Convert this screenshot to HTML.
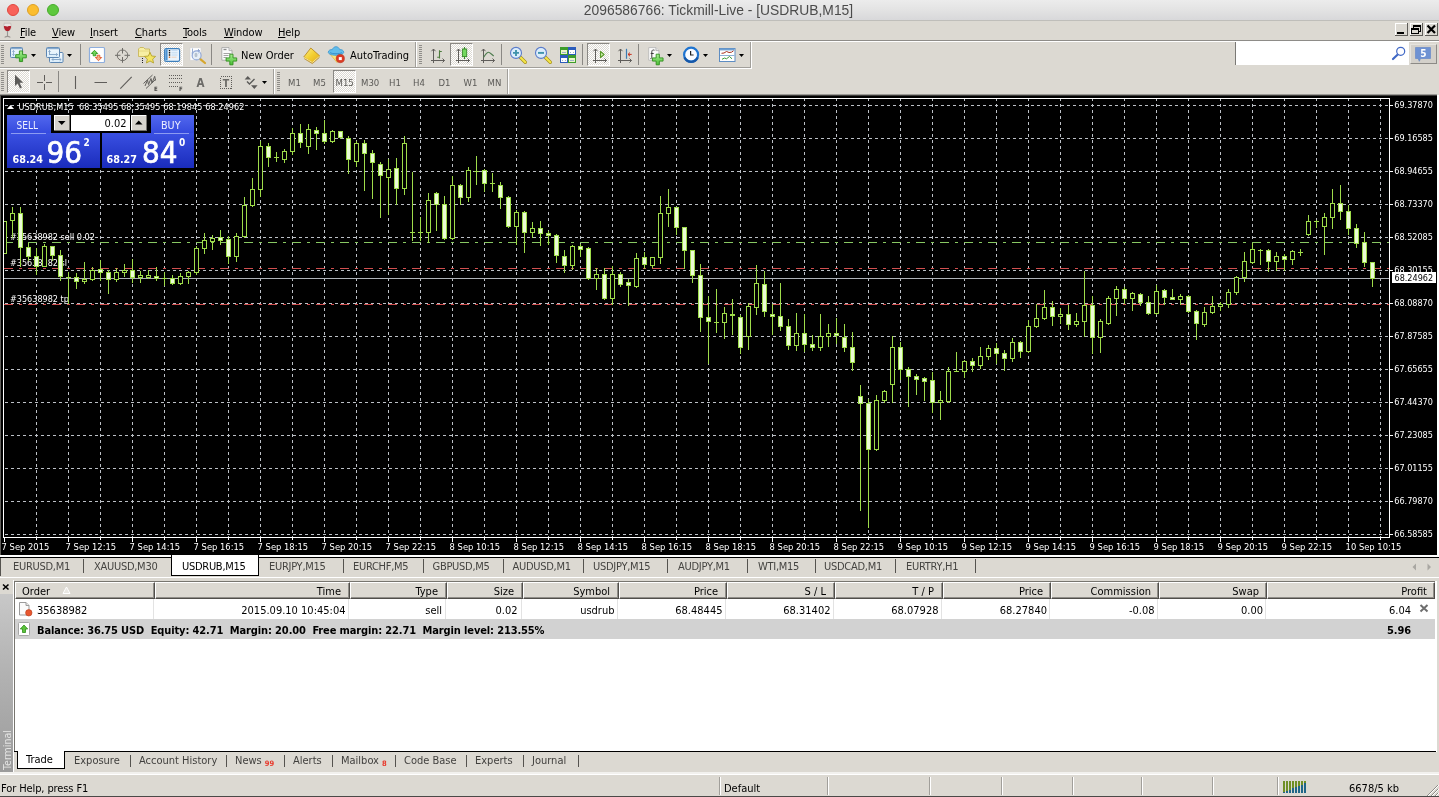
<!DOCTYPE html>
<html lang="en"><head><meta charset="utf-8"><title>2096586766: Tickmill-Live - [USDRUB,M15]</title>
<style>
*{box-sizing:border-box;margin:0;padding:0}
html,body{width:1439px;height:797px;overflow:hidden;background:#dcd9d2}
body{position:relative;font-family:"DejaVu Sans Condensed","DejaVu Sans","Liberation Sans",sans-serif;font-stretch:condensed;font-size:11px;color:#000;-webkit-font-smoothing:antialiased}
.abs{position:absolute}
.t{position:absolute;white-space:nowrap;line-height:14px;height:14px}
#titlebar{left:0;top:0;width:1439px;height:21px;background:linear-gradient(#ececec,#e4e4e4 45%,#d8d8da);border-bottom:1px solid #bfbeba}
#title{font-family:"Liberation Sans",sans-serif;left:-1px;width:1439px;top:2px;text-align:center;font-size:13.85px;line-height:16px;height:16px;color:#4b4b4b}
.tl{position:absolute;top:4px;width:12px;height:12px;border-radius:50%}
#menubar{left:0;top:21px;width:1439px;height:20px;background:#dcd9d2}
.menu{top:26px;font-size:11px;letter-spacing:-.1px}
.menu u{text-decoration:underline;text-underline-offset:1px}
.hline{position:absolute;left:0;width:1439px;height:1px}
.vsep{position:absolute;width:1px;background:#8a8884}
.grip{position:absolute;width:3px;background:repeating-linear-gradient(#8f8d89 0 1px,transparent 1px 2px)}
.pressed{position:absolute;border:1px solid;border-color:#8a8884 #fff #fff #8a8884;background-color:#ebe9e5;background-image:repeating-conic-gradient(#fff 0 25%,#dcd9d2 0 50%);background-size:2px 2px}
svg{position:absolute;overflow:visible}
.ctab{top:560px;color:#454441;font-size:11px;letter-spacing:-.28px}
.csep{position:absolute;top:559px;width:1px;height:14px;background:#55534f}
.hc{position:absolute;top:582px;height:17px;border:1px solid;border-color:#fff #504e4a #504e4a #fff;box-shadow:inset -1px -1px 0 #908e89}
.r{text-align:right}
.b{font-weight:bold;letter-spacing:-.13px}
.rs{position:absolute;top:599px;width:1px;height:20px;background:#e3e3e3}
.btab{top:754px;color:#403f3d}
.bsep{position:absolute;top:755px;width:1px;height:12px;background:#55534f}
.red{color:#e8392c;font-size:7.5px;font-weight:bold;margin-left:3px;position:relative;top:2px}
.ssep{position:absolute;top:777px;width:2px;height:18px;border-left:1px solid #a19f9a;border-right:1px solid #fff}
.per{top:75.5px;font-size:9.5px;color:#5a5956}
#root{position:absolute;left:0;top:0;width:1439px;height:797px;will-change:transform;overflow:hidden}
</style></head><body><div id="root">
<!-- TITLE BAR -->
<div id="titlebar" class="abs">
<div class="tl" style="left:7px;background:#f8615a;border:0.5px solid #e0473f"></div>
<div class="tl" style="left:27px;background:#fbbd2f;border:0.5px solid #dea025"></div>
<div class="tl" style="left:47px;background:#5ec83e;border:0.5px solid #47ac2b"></div>
<div id="title" class="t">2096586766: Tickmill-Live - [USDRUB,M15]</div>
</div>
<!-- MENU BAR -->
<div id="menubar" class="abs"></div>
<svg style="left:2px;top:22px" width="12" height="18" viewBox="0 0 12 18">
<path d="M2.2 1.2h6.6c.6 3 .5 5.6-1.4 7.3-1 .9-2.8.9-3.8 0C1.7 6.8 1.6 4.2 2.2 1.200z" fill="#e9e4e2" stroke="#b9b2ae" stroke-width=".6"/>
<path d="M1.9 4.300c1.2-.7 2.6.5 3.9.1 1-.3 2-.5 3.3-.1-.1 1.7-.6 3.2-1.7 4.1-1 .9-2.8.9-3.8 0-1.1-.9-1.6-2.5-1.7-4.100z" fill="#b3202c"/>
<path d="M5.5 9v5.5" stroke="#9a9591" stroke-width="1.1"/><path d="M2.6 15.400c1.5-1 4.3-1 5.8 0" stroke="#9a9591" stroke-width="1.1" fill="none"/>
</svg>
<div class="t menu" style="left:20px"><u>F</u>ile</div>
<div class="t menu" style="left:52px"><u>V</u>iew</div>
<div class="t menu" style="left:90px"><u>I</u>nsert</div>
<div class="t menu" style="left:135px"><u>C</u>harts</div>
<div class="t menu" style="left:183px"><u>T</u>ools</div>
<div class="t menu" style="left:224px"><u>W</u>indow</div>
<div class="t menu" style="left:278px"><u>H</u>elp</div>
<!-- MDI buttons -->
<svg style="left:1395px;top:23px" width="44" height="14" viewBox="0 0 44 14" shape-rendering="crispEdges">
<g id="mb"><rect x="0" y="0" width="13" height="13" fill="#dcd9d2"/><path d="M.5 12V.5H12" fill="none" stroke="#fff"/><path d="M0 12.500h12.500V0" fill="none" stroke="#5f5d59"/></g>
<use href="#mb" x="15"/><use href="#mb" x="30"/>
<rect x="2" y="9" width="7" height="2" fill="#000"/>
<path d="M18 2h8v2h-8zM18 4h1v2h-1zM25 4h1v5h-1zM23 8h3v1h-3z M16 5h8v2h-8zM16 7h1v4h-1zM23 7h1v4h-1zM16 10h8v1h-8z" fill="#000"/>
<path d="M32.500 2.500l7.500 7.500M40 2.500l-7.500 7.500" stroke="#000" stroke-width="2.200" shape-rendering="auto"/>
</svg>
<!-- separators under menu -->
<div class="hline" style="top:40px;background:#8e8c88"></div>
<div class="hline" style="top:41px;background:#fff"></div>
<div class="hline" style="top:67px;width:751px;background:#a19f9a"></div>
<div class="hline" style="top:68px;width:752px;background:#fff"></div>
<div class="vsep" style="left:750px;top:42px;height:26px;background:#a19f9a"></div>
<div class="vsep" style="left:751px;top:42px;height:27px;background:#fff"></div>
<div class="vsep" style="left:507px;top:69px;height:25px;background:#a19f9a"></div>
<div class="vsep" style="left:508px;top:69px;height:25px;background:#fff"></div>
<!-- grips -->
<div class="grip" style="left:1px;top:45px;height:19px"></div>
<div class="grip" style="left:419px;top:45px;height:19px"></div>
<div class="grip" style="left:1px;top:72px;height:19px"></div>
<div class="grip" style="left:277px;top:72px;height:19px"></div>
<!-- toolbar separators -->
<div class="vsep" style="left:80px;top:44px;height:21px"></div>
<div class="vsep" style="left:211px;top:44px;height:21px"></div>
<div class="vsep" style="left:415px;top:42px;height:25px;background:#a19f9a"></div><div class="vsep" style="left:416px;top:42px;height:25px;background:#fff"></div>
<div class="vsep" style="left:501px;top:44px;height:21px"></div>
<div class="vsep" style="left:582px;top:44px;height:21px"></div>
<div class="vsep" style="left:638px;top:44px;height:21px"></div>
<div class="vsep" style="left:58px;top:71px;height:21px"></div>
<div class="vsep" style="left:273px;top:69px;height:25px;background:#a19f9a"></div><div class="vsep" style="left:274px;top:69px;height:25px;background:#fff"></div>
<!-- pressed buttons -->
<div class="pressed" style="left:160px;top:43px;width:23px;height:23px"></div>
<div class="pressed" style="left:450px;top:43px;width:23px;height:23px"></div>
<div class="pressed" style="left:587px;top:43px;width:23px;height:23px"></div>
<div class="pressed" style="left:7px;top:70px;width:23px;height:23px"></div>
<div class="pressed" style="left:333px;top:70px;width:23px;height:23px"></div>
<!-- toolbar text -->
<div class="t" style="left:241px;top:49px;font-size:11px">New Order</div>
<div class="t" style="left:350px;top:49px;font-size:11px">AutoTrading</div>
<div class="t per" style="left:288px">M1</div>
<div class="t per" style="left:313px">M5</div>
<div class="t per" style="left:335.500px">M15</div>
<div class="t per" style="left:361px">M30</div>
<div class="t per" style="left:389px">H1</div>
<div class="t per" style="left:413px">H4</div>
<div class="t per" style="left:438.500px">D1</div>
<div class="t per" style="left:463.500px">W1</div>
<div class="t per" style="left:487.500px">MN</div>
<!-- search box -->
<div class="abs" style="left:1235px;top:42px;width:174px;height:23px;background:#fff;border-left:1px solid #7b7975"></div>
<div class="abs" style="left:1410px;top:44px;width:27px;height:20px;background:#d3d0ca;border:1px solid;border-color:#e6e4df #8c8a86 #8c8a86 #e6e4df"></div>
<svg style="left:0;top:0" width="1439" height="95" viewBox="0 0 1439 95">
<defs>
<linearGradient id="gplus" x1="0" y1="0" x2="0" y2="1"><stop offset="0" stop-color="#a9ef93"/><stop offset="1" stop-color="#48bd34"/></linearGradient>
<linearGradient id="gwin" x1="0" y1="0" x2="0" y2="1"><stop offset="0" stop-color="#f4fafe"/><stop offset="1" stop-color="#d9ecfa"/></linearGradient>
<linearGradient id="ggold" x1="0" y1="0" x2="1" y2="1"><stop offset="0" stop-color="#fdf08a"/><stop offset=".5" stop-color="#f3cf30"/><stop offset="1" stop-color="#e0a820"/></linearGradient>
<g id="dd"><path d="M0 0h5L2.5 3z" fill="#000"/></g>
<g id="plus"><path d="M3.700 0h3.200v3.700h3.700v3.200H6.900v3.700H3.700V6.900H0V3.700h3.700z" fill="url(#gplus)" stroke="#2f8f1d" stroke-width=".9" stroke-linejoin="round"/></g>
<g id="axes" fill="none" stroke="#5f5d5a" stroke-width="1"><path d="M2.5 1v14M.5 3.200l2-2.2 2 2.200M0 12.500h13.500M11.5 10.500l2 2-2 2"/></g>
</defs>
<!-- 1 new chart -->
<rect x="10.5" y="47.5" width="12" height="10" rx="1" fill="url(#gwin)" stroke="#5d86b2"/>
<path d="M11 48.500h11" stroke="#86a9cd" stroke-width="1.5"/>
<path d="M13.5 50.500v5M12.3 51.800l1.2-1.3 1.2 1.300M12.3 54.300l1.2 1.2 1.2-1.2" fill="none" stroke="#7fa0c4" stroke-width=".8"/>
<use href="#plus" x="15.700" y="50.950"/>
<use href="#dd" x="31" y="54"/>
<!-- 2 profiles -->
<rect x="49.5" y="52.5" width="13.5" height="10" rx="1" fill="url(#gwin)" stroke="#5d86b2"/>
<path d="M52 59.500h9M53.3 58.200l-1.3 1.3 1.3 1.300M59.7 58.200l1.3 1.3-1.3 1.3" fill="none" stroke="#7fa0c4" stroke-width=".9"/>
<rect x="46.5" y="47.5" width="13" height="10" rx="1" fill="url(#gwin)" stroke="#5d86b2"/>
<path d="M47 48.500h12" stroke="#86a9cd" stroke-width="1.5"/>
<path d="M49.5 50.500v4.500M48.4 51.700l1.1-1.2 1.1 1.200M49.5 54.500h8M56.2 53.200l1.3 1.3-1.3 1.3" fill="none" stroke="#7fa0c4" stroke-width=".9"/>
<use href="#dd" x="67" y="54"/>
<!-- 3 market watch -->
<rect x="89.5" y="47.5" width="15" height="15" rx="1" fill="#fff" stroke="#8eaedd" stroke-width="1.2"/>
<path d="M94.500 50.300l3.200 3.200h-1.900v2.300h-2.600v-2.300h-1.900z" fill="#6fd45a" stroke="#2f9a1d" stroke-width=".9"/>
<path d="M98.500 60.700l3.200-3.200h-1.900v-2.300h-2.600v2.300h-1.900z" fill="#f7b08c" stroke="#e0592c" stroke-width=".9"/>
<!-- 4 crosshair -->
<g fill="none" stroke="#6f6d69" stroke-width="1"><circle cx="122.5" cy="55.3" r="5.3"/><path d="M122.5 48v5.500M122.5 57v5.800M115 55.300h5.500M124.5 55.300h5.5"/></g>
<!-- 5 folder star -->
<path d="M138.5 56.500v-7.500l1.5-1.500h3.500l1.5 1.500h4.500v7.500z" fill="#f7efa4" stroke="#c8b75a" stroke-width=".9"/>
<path d="M139 51h10.5" stroke="#e6d880" stroke-width="1"/>
<path d="M150 52.300l1.650 3.7 4 .4-3 2.7.9 3.9-3.550-2.050-3.550 2.050.9-3.9-3-2.7 4-.4z" fill="#f3e463" stroke="#b5a42f" stroke-width=".9" stroke-linejoin="round"/>
<path d="M142 58h1v1h-1zM142 60h1v1h-1zM142 62h1v1h-1z" fill="#222"/>
<!-- 6 navigator (pressed) -->
<rect x="164.6" y="48.6" width="15" height="12.8" rx="1.6" fill="#eaf5fd" stroke="#3d7fbd" stroke-width="1.15"/>
<path d="M165.300 49.800v10.400h2.300V49.300h-1.800z" fill="#4c93d2"/>
<path d="M168.800 49.900h1.400v1.400h-1.400zM168.800 52.100h1.400v1.400h-1.400zM168.800 54.300h1.400v1.400h-1.400z" fill="#111"/><path d="M168.800 56.500h1.400v1.400h-1.400z" fill="#d2691e"/>
<path d="M171.5 50.600h6M171.5 52.800h6M171.5 55h6" stroke="#b5d3ee" stroke-width=".8"/><path d="M171.5 57.200h5" stroke="#efc8a8" stroke-width=".8"/>
<!-- 7 chart magnifier -->
<rect x="190" y="47.8" width="11" height="12.4" fill="#fdfdfd" stroke="#d2d2d2" stroke-width=".6"/>
<path d="M192.5 48.500v8M191.5 53h2.500M198.5 49v5M197.5 50.500h2.5" stroke="#8ea5cc" stroke-width=".9" fill="none"/>
<path d="M200 58.800l5 4.2" stroke="#d6a62c" stroke-width="2.2" stroke-linecap="round"/>
<circle cx="196.6" cy="55.4" r="4.5" fill="#dfeaf6" fill-opacity=".75" stroke="#8fa6d6" stroke-width="1.1"/>
<ellipse cx="196" cy="55" rx="1.5" ry="2.3" fill="#b7c2cf"/>
<!-- 8 new order -->
<path d="M221.8 47.600h7.200l3 3v9.600h-10.200z" fill="#fbfbfb" stroke="#9f9f9f" stroke-width=".8"/>
<path d="M229 47.600v3h3" fill="#e4e4e4" stroke="#9f9f9f" stroke-width=".7"/>
<path d="M223.5 49.500h3" stroke="#8b8b8b" stroke-width="1.3"/><path d="M223.5 53.500h7M223.5 55.500h5M223.5 57.500h3" stroke="#9a9a9a" stroke-width=".9"/>
<use href="#plus" x="226.100" y="54.200"/>
<!-- 9 metaeditor -->
<path d="M310.8 48l9 8-7.5 6.7-8.5-5.700z" fill="url(#ggold)" stroke="#b98a23" stroke-width=".9" stroke-linejoin="round"/>
<path d="M304 57.500l8.3 5 7.3-6.3" fill="none" stroke="#fbe993" stroke-width="1"/>
<path d="M304.2 58.600l8.1 5 7.2-6.2" fill="none" stroke="#b98a23" stroke-width=".8"/>
<!-- 10 autotrading -->
<path d="M329.5 53.500l7.5 9 5-9.500z" fill="#f9e47a" stroke="#e0b73a" stroke-width=".7"/>
<path d="M328.3 52.300c0-2 2.2-3 4-2.6.6-2 2.2-3 3.7-3s3.2 1 3.7 3c1.8-.4 4 .6 4 2.6 0 1.8-3.8 3-7.7 3s-7.7-1.2-7.7-3z" fill="#62bdea" stroke="#3a94cf" stroke-width=".8"/>
<path d="M330 52.500c1.5 1.6 10.5 1.6 12 0" fill="none" stroke="#2f86c4" stroke-width=".8"/>
<circle cx="340.3" cy="58.6" r="4.1" fill="#dc3a22" stroke="#b92a18" stroke-width=".6"/><rect x="338.8" y="57.1" width="3" height="3" fill="#fff"/>
<!-- 11 bars -->
<use href="#axes" x="431" y="48"/>
<path d="M439.5 50.300v8.300M439.5 51.500h2.300M437.2 57.300h2.3" stroke="#4d7c3c" stroke-width="1.1" fill="none"/>
<!-- 12 candle -->
<use href="#axes" x="456" y="48"/>
<path d="M464.5 47v12" stroke="#3a8a2a" stroke-width="1.1"/><rect x="462.4" y="49" width="4.3" height="7.6" fill="#73d85f" stroke="#3a8a2a" stroke-width=".9"/>
<!-- 13 line -->
<use href="#axes" x="481" y="48"/>
<path d="M483.5 57.500c1.5-2.5 3.3-5 4.8-5.3 1.5-.2 3.3 2.3 5.4 3.8" stroke="#4d7c4d" stroke-width="1.1" fill="none"/>
<!-- 14 zoom in -->
<path d="M520 57l5.3 5.3" stroke="#a58f1c" stroke-width="3.4" stroke-linecap="round"/><path d="M520.3 57.300l5 5" stroke="#f4e648" stroke-width="2" stroke-linecap="round"/>
<circle cx="516" cy="52.9" r="5.5" fill="#dbedfb" stroke="#5b7cca" stroke-width="1.1"/>
<path d="M513 52.900h6M516 49.900v6" stroke="#3f93ac" stroke-width="1.9"/>
<!-- 15 zoom out -->
<path d="M545 57l5.3 5.3" stroke="#a58f1c" stroke-width="3.4" stroke-linecap="round"/><path d="M545.3 57.300l5 5" stroke="#f4e648" stroke-width="2" stroke-linecap="round"/>
<circle cx="541" cy="52.9" r="5.5" fill="#dbedfb" stroke="#5b7cca" stroke-width="1.1"/>
<path d="M538 52.900h6" stroke="#3f93ac" stroke-width="1.9"/>
<!-- 16 tile -->
<g shape-rendering="crispEdges"><rect x="560" y="47" width="8" height="8" fill="#3d9c2b"/><rect x="568" y="47" width="8" height="8" fill="#2b5cbb"/><rect x="560" y="55" width="8" height="8" fill="#2b5cbb"/><rect x="568" y="55" width="8" height="8" fill="#3d9c2b"/>
<rect x="561" y="50" width="6" height="4" fill="#eaf6c8"/><rect x="569" y="50" width="6" height="4" fill="#fff"/><rect x="561" y="58" width="6" height="4" fill="#fff"/><rect x="569" y="58" width="6" height="4" fill="#eaf6c8"/>
<path d="M562 52h4M570 52h1M573 52h1M562 60h1M565 60h1M570 60h4" stroke="#9fb3c9" stroke-width="1"/></g>
<!-- 17 autoscroll -->
<use href="#axes" x="593" y="48"/>
<path d="M600.5 51.500v6l3.6-3z" fill="#cdeeb0" stroke="#5a9c2b" stroke-width="1.1" stroke-linejoin="round"/>
<!-- 18 chart shift -->
<use href="#axes" x="618" y="48"/>
<path d="M626.5 48.800v10" stroke="#3b7cb3" stroke-width="1.2"/><path d="M628 54.400h3.700M630 52.600l-2 1.8 2 1.8" stroke="#c9301e" stroke-width="1" fill="none"/>
<!-- 19 indicators -->
<path d="M648.7 47.600h7.200l3 3v9.600h-10.200z" fill="#fbfbfb" stroke="#b3b3b3" stroke-width=".8"/>
<path d="M655.9 47.600v3h3" fill="#e4e4e4" stroke="#9f9f9f" stroke-width=".7"/>
<path d="M654.5 50.200c-1.6-.6-2.7 0-2.7 1.500v5.500c0 1-.5 1.5-1.3 1.300M650.7 53.500h3" stroke="#3c3c3c" stroke-width="1" fill="none"/>
<use href="#plus" x="652.450" y="54.200"/>
<use href="#dd" x="667" y="54"/>
<!-- 20 clock -->
<circle cx="691.1" cy="54.7" r="7" fill="#fafcff" stroke="#1f74d0" stroke-width="2.2"/>
<path d="M684.5 57.500a7.2 7.2 0 0 0 13.2 0" fill="none" stroke="#1557a8" stroke-width="2.2"/>
<path d="M690.6 51v4h3" stroke="#222" stroke-width="1.2" fill="none"/>
<use href="#dd" x="703" y="54"/>
<!-- 21 template -->
<rect x="719.5" y="48.5" width="15.5" height="13" fill="#fff" stroke="#5e8dc2" stroke-width="1"/>
<path d="M720 49.500h14.5" stroke="#6fa0d2" stroke-width="1.8"/><path d="M720 55.500h14.5" stroke="#8fb0d5" stroke-width="1"/>
<path d="M721.5 53.300l2.5-.3 2.5-1.5 2.5 1 2.5-.3 2-1.4" stroke="#a8321f" stroke-width="1" fill="none"/>
<path d="M722 59.300l2.5-1.3 2 .8 3-2.3 2.5 2.3" stroke="#3e9a3a" stroke-width="1" fill="none"/>
<use href="#dd" x="739" y="54"/>
<!-- search magnifier + chat -->
<path d="M1398 54.300l-5 4.7" stroke="#3f67c5" stroke-width="2.2" stroke-linecap="round"/>
<circle cx="1400.7" cy="51.3" r="4" fill="#fdfdff" stroke="#3f67c5" stroke-width="1.2"/>
<path d="M1415.5 47.500h15v11h-10l-1.2 2.8-1.2-2.800h-2.600z" fill="#6e92d3" stroke="#5f83c6" stroke-width=".6"/>
<text x="1423.3" y="57" font-size="10" font-weight="bold" fill="#fff" text-anchor="middle" font-family="DejaVu Sans Condensed, DejaVu Sans, Liberation Sans, sans-serif" font-stretch="condensed">5</text>
<!-- TOOLBAR 2 -->
<path d="M15 74.800v11.200l2.7-2.5 2.3 5 1.9-.9-2.3-4.800h3.600z" fill="#5b5a58"/>
<path d="M37 82.500h6M46 82.500h6M44.5 75v6M44.5 84v6" stroke="#5f5d5a" stroke-width="1" fill="none"/>
<path d="M75.5 76v13M94.5 82.500H107" stroke="#5f5d5a" stroke-width="1.1" fill="none"/>
<path d="M120.3 88.600L131.7 76.8" stroke="#5f5d5a" stroke-width="1.1"/>
<g stroke="#5f5d5a" stroke-width="1" fill="none"><path d="M143.5 83.500l9-8.500M146 88.500l10-9.500M145 86l2.5-6 1 4.5 2.5-6 1 4.5 2.7-6.7.8 4.2"/></g>
<text x="154" y="90.8" font-size="6" font-weight="bold" fill="#4a4947" font-family="DejaVu Sans Condensed, DejaVu Sans, Liberation Sans, sans-serif" font-stretch="condensed">E</text>
<g fill="#5f5d5a" shape-rendering="crispEdges"><path d="M169 75h1v1h-1zM171 75h1v1h-1zM173 75h1v1h-1zM175 75h1v1h-1zM177 75h1v1h-1zM179 75h1v1h-1zM181 75h1v1h-1zM169 78h1v1h-1zM171 78h1v1h-1zM173 78h1v1h-1zM175 78h1v1h-1zM177 78h1v1h-1zM179 78h1v1h-1zM181 78h1v1h-1zM169 82h1v1h-1zM171 82h1v1h-1zM173 82h1v1h-1zM175 82h1v1h-1zM177 82h1v1h-1zM179 82h1v1h-1zM181 82h1v1h-1zM169 86h1v1h-1zM171 86h1v1h-1zM173 86h1v1h-1zM175 86h1v1h-1zM177 86h1v1h-1z"/></g>
<text x="179" y="90.8" font-size="6" font-weight="bold" fill="#4a4947" font-family="DejaVu Sans Condensed, DejaVu Sans, Liberation Sans, sans-serif" font-stretch="condensed">F</text>
<text x="196.5" y="86.7" font-size="11.5" font-weight="bold" fill="#6b6a67" font-family="DejaVu Sans Condensed, DejaVu Sans, Liberation Sans, sans-serif" font-stretch="condensed">A</text>
<rect x="220.5" y="76.5" width="11" height="12" fill="none" stroke="#5f5d5a" stroke-width="1" stroke-dasharray="1 1" shape-rendering="crispEdges"/>
<text x="222.8" y="87" font-size="10.5" font-weight="bold" fill="#6b6a67" font-family="DejaVu Sans Condensed, DejaVu Sans, Liberation Sans, sans-serif" font-stretch="condensed">T</text>
<path d="M247.8 76l3.2 3.500h-6.400z M254.3 89l3.3-3.800h-6.600z" fill="#5b5a58"/><path d="M247 81.500l2.5 2.5 5-5" stroke="#5b5a58" stroke-width="1.4" fill="none"/>
<use href="#dd" x="262" y="81"/>
</svg>
<div class="abs" style="left:1437px;top:95px;width:2px;height:462px;background:#fff"></div><div class="abs" style="left:0;top:94px;width:1437px;height:1px;background:#9c9a96"></div><div class="abs" style="left:0;top:95px;width:1437px;height:460px;background:#000;border-left:1px solid #5f5d59;border-top:1px solid #3c3b39"></div>
<svg style="left:0;top:0" width="1439" height="560" viewBox="0 0 1439 560" shape-rendering="crispEdges" font-family="DejaVu Sans Condensed, DejaVu Sans, Liberation Sans, sans-serif" font-stretch="condensed">
<path d="M36.5 98V537M68.5 98V537M100.5 98V537M132.5 98V537M164.5 98V537M196.5 98V537M228.5 98V537M260.5 98V537M292.5 98V537M324.5 98V537M356.5 98V537M388.5 98V537M420.5 98V537M452.5 98V537M484.5 98V537M516.5 98V537M548.5 98V537M580.5 98V537M612.5 98V537M644.5 98V537M676.5 98V537M708.5 98V537M740.5 98V537M772.5 98V537M804.5 98V537M836.5 98V537M868.5 98V537M900.5 98V537M932.5 98V537M964.5 98V537M996.5 98V537M1028.5 98V537M1060.5 98V537M1092.5 98V537M1124.5 98V537M1156.5 98V537M1188.5 98V537M1220.5 98V537M1252.5 98V537M1284.5 98V537M1316.5 98V537M1348.5 98V537M1380.5 98V537M5 105.5H1389M5 138.5H1389M5 171.5H1389M5 204.5H1389M5 237.5H1389M5 270.5H1389M5 303.5H1389M5 336.5H1389M5 369.5H1389M5 402.5H1389M5 435.5H1389M5 468.5H1389M5 501.5H1389M5 534.5H1389" stroke="#bcc0c6" stroke-width="1" stroke-dasharray="3 3" fill="none"/>
<path d="M4 242.5H1389" stroke="#88c862" stroke-dasharray="9 6 3 6" fill="none"/>
<path d="M4 268.5H1389M4 304.5H1389" stroke="#d24f4f" stroke-dasharray="9 6 3 6" fill="none"/>
<path d="M4 278.5H1389" stroke="#aeb2b8" fill="none"/>
<g fill="#fff" font-size="9" shape-rendering="auto">
<text x="10" y="239.5">#35638982 sell 0.02</text>
<text x="10" y="265.5">#35638982 sl</text>
<text x="10" y="301.5">#35638982 tp</text>
</g>

<path d="M4.5 221.0V254.0M12.5 207.0V238.0M20.5 207.0V267.0M28.5 243.0V261.0M36.5 248.0V275.0M44.5 244.0V267.0M52.5 246.0V261.0M60.5 250.0V281.0M68.5 272.0V304.0M76.5 273.0V289.0M84.5 262.0V284.0M92.5 267.0V281.0M100.5 260.0V281.0M108.5 270.0V294.0M116.5 268.0V282.0M124.5 264.0V277.0M132.5 259.0V283.0M140.5 271.0V283.0M148.5 270.0V279.0M156.5 267.0V281.0M164.5 272.0V286.0M172.5 275.0V285.0M180.5 273.0V285.0M188.5 271.0V284.0M196.5 246.0V275.0M204.5 233.0V254.0M212.5 235.0V250.0M220.5 230.0V245.0M228.5 236.0V264.0M236.5 233.0V262.0M244.5 197.0V238.0M252.5 178.0V207.0M260.5 141.0V197.0M268.5 143.0V167.0M276.5 152.0V162.0M284.5 149.0V163.0M292.5 128.0V155.0M300.5 124.0V148.0M308.5 124.0V154.0M316.5 127.0V150.0M324.5 120.0V144.0M332.5 130.0V143.0M340.5 131.0V139.0M348.5 136.0V174.0M356.5 141.0V167.0M364.5 140.0V191.0M372.5 150.0V199.0M380.5 162.0V218.0M388.5 159.0V215.0M396.5 158.0V205.0M404.5 136.0V195.0M412.5 172.0V241.0M420.5 217.0V241.0M428.5 193.0V243.0M436.5 192.0V231.0M444.5 196.0V240.0M452.5 176.0V240.0M460.5 184.0V205.0M468.5 167.0V202.0M476.5 156.0V185.0M484.5 169.0V192.0M492.5 173.0V192.0M500.5 182.0V209.0M508.5 196.0V228.0M516.5 210.0V245.0M524.5 211.0V253.0M532.5 222.0V238.0M540.5 221.0V246.0M548.5 231.0V245.0M556.5 234.0V263.0M564.5 250.0V273.0M572.5 245.0V270.0M580.5 244.0V257.0M588.5 247.0V280.0M596.5 268.0V290.0M604.5 268.0V300.0M612.5 266.0V305.0M620.5 272.0V287.0M628.5 279.0V306.0M636.5 253.0V288.0M644.5 252.0V269.0M652.5 257.0V268.0M660.5 196.0V264.0M668.5 189.0V227.0M676.5 207.0V235.0M684.5 227.0V269.0M692.5 250.0V283.0M700.5 264.0V332.0M708.5 296.0V364.0M716.5 289.0V333.0M724.5 307.0V339.0M732.5 299.0V335.0M740.5 315.0V354.0M748.5 303.0V350.0M756.5 265.0V315.0M764.5 271.0V317.0M772.5 304.0V335.0M780.5 283.0V331.0M788.5 319.0V350.0M796.5 313.0V351.0M804.5 314.0V352.0M812.5 335.0V351.0M820.5 314.0V351.0M828.5 324.0V347.0M836.5 318.0V344.0M844.5 324.0V352.0M852.5 332.0V371.0M860.5 385.0V511.0M868.5 399.0V528.0M876.5 395.0V451.0M884.5 390.0V403.0M892.5 336.0V403.0M900.5 342.0V380.0M908.5 367.0V407.0M916.5 374.0V395.0M924.5 377.0V401.0M932.5 372.0V413.0M940.5 391.0V420.0M948.5 367.0V403.0M956.5 352.0V372.0M964.5 360.0V378.0M972.5 358.0V372.0M980.5 347.0V369.0M988.5 345.0V360.0M996.5 343.0V364.0M1004.5 350.0V371.0M1012.5 338.0V362.0M1020.5 341.0V358.0M1028.5 320.0V353.0M1036.5 304.0V328.0M1044.5 290.0V320.0M1052.5 301.0V326.0M1060.5 308.0V324.0M1068.5 305.0V330.0M1076.5 313.0V327.0M1084.5 271.0V337.0M1092.5 296.0V354.0M1100.5 319.0V353.0M1108.5 296.0V325.0M1116.5 286.0V316.0M1124.5 287.0V304.0M1132.5 292.0V311.0M1140.5 293.0V306.0M1148.5 296.0V315.0M1156.5 285.0V315.0M1164.5 289.0V305.0M1172.5 289.0V300.0M1180.5 294.0V305.0M1188.5 295.0V313.0M1196.5 310.0V340.0M1204.5 307.0V327.0M1212.5 296.0V314.0M1220.5 302.0V311.0M1228.5 289.0V308.0M1236.5 276.0V295.0M1244.5 252.0V282.0M1252.5 243.0V264.0M1260.5 249.0V265.0M1268.5 249.0V272.0M1276.5 252.0V271.0M1284.5 254.0V271.0M1292.5 250.0V265.0M1300.5 249.0V256.0M1308.5 215.0V236.0M1316.5 220.0V228.0M1324.5 213.0V255.0M1332.5 189.0V229.0M1340.5 185.0V220.0M1348.5 205.0V235.0M1356.5 224.0V248.0M1364.5 232.0V267.0M1372.5 262.0V287.0" stroke="#9edc4a" fill="none"/><path d="M2.5 221.5H6.5V253.5H2.5zM10.5 213.5H14.5V220.5H10.5zM42.5 246.5H46.5V266.5H42.5zM66 277.5H71M82.5 279.5H86.5V281.5H82.5zM90.5 270.5H94.5V279.5H90.5zM114.5 272.5H118.5V279.5H114.5zM122.5 270.5H126.5V272.5H122.5zM138.5 275.5H142.5V277.5H138.5zM146.5 275.5H150.5V277.5H146.5zM162 278.5H167M178.5 276.5H182.5V283.5H178.5zM186.5 272.5H190.5V276.5H186.5zM194.5 248.5H198.5V272.5H194.5zM202.5 240.5H206.5V248.5H202.5zM210.5 238.5H214.5V241.5H210.5zM234.5 236.5H238.5V256.5H234.5zM242.5 205.5H246.5V236.5H242.5zM250.5 189.5H254.5V205.5H250.5zM258.5 146.5H262.5V189.5H258.5zM274 157.5H279M282.5 151.5H286.5V159.5H282.5zM290.5 133.5H294.5V151.5H290.5zM306.5 129.5H310.5V146.5H306.5zM330.5 131.5H334.5V141.5H330.5zM354.5 143.5H358.5V161.5H354.5zM386.5 169.5H390.5V177.5H386.5zM402.5 143.5H406.5V188.5H402.5zM410 232.5H415M418 232.5H423M426.5 200.5H430.5V232.5H426.5zM450.5 185.5H454.5V238.5H450.5zM466.5 170.5H470.5V197.5H466.5zM474 171.5H479M490 183.5H495M514.5 212.5H518.5V226.5H514.5zM530.5 228.5H534.5V232.5H530.5zM570.5 246.5H574.5V265.5H570.5zM594.5 274.5H598.5V278.5H594.5zM610.5 274.5H614.5V298.5H610.5zM634.5 258.5H638.5V286.5H634.5zM650.5 257.5H654.5V265.5H650.5zM658.5 213.5H662.5V257.5H658.5zM666.5 207.5H670.5V213.5H666.5zM714 322.5H719M722.5 313.5H726.5V322.5H722.5zM746.5 306.5H750.5V336.5H746.5zM754.5 283.5H758.5V307.5H754.5zM794.5 333.5H798.5V345.5H794.5zM818.5 336.5H822.5V347.5H818.5zM826.5 333.5H830.5V336.5H826.5zM874.5 400.5H878.5V449.5H874.5zM882.5 391.5H886.5V400.5H882.5zM890.5 347.5H894.5V384.5H890.5zM938.5 400.5H942.5V402.5H938.5zM946.5 371.5H950.5V401.5H946.5zM954 371.5H959M962.5 361.5H966.5V371.5H962.5zM978.5 356.5H982.5V365.5H978.5zM986.5 348.5H990.5V356.5H986.5zM1010.5 342.5H1014.5V358.5H1010.5zM1026.5 326.5H1030.5V351.5H1026.5zM1034.5 318.5H1038.5V326.5H1034.5zM1042.5 307.5H1046.5V318.5H1042.5zM1058.5 314.5H1062.5V316.5H1058.5zM1074.5 321.5H1078.5V324.5H1074.5zM1082.5 305.5H1086.5V321.5H1082.5zM1098.5 321.5H1102.5V337.5H1098.5zM1106.5 298.5H1110.5V323.5H1106.5zM1114.5 289.5H1118.5V298.5H1114.5zM1130.5 293.5H1134.5V298.5H1130.5zM1154.5 291.5H1158.5V313.5H1154.5zM1178.5 296.5H1182.5V299.5H1178.5zM1202.5 312.5H1206.5V324.5H1202.5zM1210.5 306.5H1214.5V312.5H1210.5zM1218.5 304.5H1222.5V306.5H1218.5zM1226.5 292.5H1230.5V304.5H1226.5zM1234.5 277.5H1238.5V292.5H1234.5zM1242.5 261.5H1246.5V277.5H1242.5zM1250.5 249.5H1254.5V262.5H1250.5zM1258 250.5H1263M1274.5 256.5H1278.5V261.5H1274.5zM1290.5 251.5H1294.5V259.5H1290.5zM1298 252.5H1303M1306.5 221.5H1310.5V234.5H1306.5zM1314 221.5H1319M1322.5 217.5H1326.5V226.5H1322.5zM1330.5 203.5H1334.5V217.5H1330.5z" stroke="#9edc4a" fill="#000"/><path d="M18.5 213.5H22.5V247.5H18.5zM26.5 247.5H30.5V256.5H26.5zM34.5 256.5H38.5V266.5H34.5zM50.5 246.5H54.5V255.5H50.5zM58.5 255.5H62.5V276.5H58.5zM74.5 277.5H78.5V281.5H74.5zM98.5 269.5H102.5V272.5H98.5zM106.5 272.5H110.5V279.5H106.5zM130.5 270.5H134.5V277.5H130.5zM154.5 276.5H158.5V278.5H154.5zM170.5 278.5H174.5V283.5H170.5zM218.5 237.5H222.5V240.5H218.5zM226.5 239.5H230.5V256.5H226.5zM266.5 146.5H270.5V157.5H266.5zM298.5 133.5H302.5V142.5H298.5zM314.5 130.5H318.5V133.5H314.5zM322.5 133.5H326.5V141.5H322.5zM338.5 131.5H342.5V137.5H338.5zM346.5 138.5H350.5V159.5H346.5zM362.5 143.5H366.5V153.5H362.5zM370.5 153.5H374.5V162.5H370.5zM378.5 164.5H382.5V175.5H378.5zM394.5 168.5H398.5V188.5H394.5zM434.5 193.5H438.5V204.5H434.5zM442.5 204.5H446.5V238.5H442.5zM458.5 185.5H462.5V197.5H458.5zM482.5 170.5H486.5V183.5H482.5zM498.5 185.5H502.5V197.5H498.5zM506.5 197.5H510.5V226.5H506.5zM522.5 212.5H526.5V232.5H522.5zM538.5 228.5H542.5V233.5H538.5zM546.5 233.5H550.5V235.5H546.5zM554.5 235.5H558.5V255.5H554.5zM562.5 256.5H566.5V265.5H562.5zM578.5 246.5H582.5V249.5H578.5zM586.5 248.5H590.5V278.5H586.5zM602.5 274.5H606.5V298.5H602.5zM618.5 274.5H622.5V284.5H618.5zM626.5 282.5H630.5V285.5H626.5zM642.5 257.5H646.5V264.5H642.5zM674.5 207.5H678.5V227.5H674.5zM682.5 227.5H686.5V250.5H682.5zM690.5 250.5H694.5V275.5H690.5zM698.5 275.5H702.5V317.5H698.5zM706.5 317.5H710.5V321.5H706.5zM730.5 314.5H734.5V315.5H730.5zM738.5 317.5H742.5V347.5H738.5zM762.5 284.5H766.5V311.5H762.5zM770.5 314.5H774.5V316.5H770.5zM778.5 316.5H782.5V326.5H778.5zM786.5 326.5H790.5V345.5H786.5zM802.5 333.5H806.5V344.5H802.5zM810.5 344.5H814.5V347.5H810.5zM834.5 333.5H838.5V335.5H834.5zM842.5 337.5H846.5V347.5H842.5zM850.5 347.5H854.5V362.5H850.5zM858.5 396.5H862.5V403.5H858.5zM866.5 403.5H870.5V449.5H866.5zM898.5 347.5H902.5V369.5H898.5zM906.5 369.5H910.5V376.5H906.5zM914.5 376.5H918.5V379.5H914.5zM922.5 378.5H926.5V381.5H922.5zM930.5 380.5H934.5V402.5H930.5zM970.5 361.5H974.5V365.5H970.5zM994.5 348.5H998.5V353.5H994.5zM1002.5 353.5H1006.5V358.5H1002.5zM1018.5 342.5H1022.5V351.5H1018.5zM1050.5 307.5H1054.5V316.5H1050.5zM1066.5 314.5H1070.5V324.5H1066.5zM1090.5 305.5H1094.5V337.5H1090.5zM1122.5 289.5H1126.5V298.5H1122.5zM1138.5 294.5H1142.5V302.5H1138.5zM1146.5 302.5H1150.5V313.5H1146.5zM1162.5 290.5H1166.5V297.5H1162.5zM1170.5 297.5H1174.5V299.5H1170.5zM1186.5 296.5H1190.5V311.5H1186.5zM1194.5 311.5H1198.5V323.5H1194.5zM1266.5 250.5H1270.5V261.5H1266.5zM1282.5 256.5H1286.5V259.5H1282.5zM1338.5 203.5H1342.5V211.5H1338.5zM1346.5 211.5H1350.5V228.5H1346.5zM1354.5 228.5H1358.5V243.5H1354.5zM1362.5 242.5H1366.5V262.5H1362.5zM1370.5 262.5H1374.5V278.5H1370.5z" stroke="#9edc4a" fill="#ebfcd6"/>
<rect x="1" y="99" width="3" height="440" fill="#000"/>
<path d="M3.5 98.5H1389.5V537.5H3.5z" stroke="#fff" fill="none"/>
<path d="M1390 105.5h3M1390 138.5h3M1390 171.5h3M1390 204.5h3M1390 237.5h3M1390 270.5h3M1390 303.5h3M1390 336.5h3M1390 369.5h3M1390 402.5h3M1390 435.5h3M1390 468.5h3M1390 501.5h3M1390 534.5h3M4.5 538v4M36.5 538v2M68.5 538v4M100.5 538v2M132.5 538v4M164.5 538v2M196.5 538v4M228.5 538v2M260.5 538v4M292.5 538v2M324.5 538v4M356.5 538v2M388.5 538v4M420.5 538v2M452.5 538v4M484.5 538v2M516.5 538v4M548.5 538v2M580.5 538v4M612.5 538v2M644.5 538v4M676.5 538v2M708.5 538v4M740.5 538v2M772.5 538v4M804.5 538v2M836.5 538v4M868.5 538v2M900.5 538v4M932.5 538v2M964.5 538v4M996.5 538v2M1028.5 538v4M1060.5 538v2M1092.5 538v4M1124.5 538v2M1156.5 538v4M1188.5 538v2M1220.5 538v4M1252.5 538v2M1284.5 538v4M1316.5 538v2M1348.5 538v4M1380.5 538v2" stroke="#fff" fill="none"/>
<g fill="#fff" font-size="9" shape-rendering="auto">
<text x="1394.3" y="107.9">69.37870</text>
<text x="1394.3" y="140.9">69.16585</text>
<text x="1394.3" y="173.9">68.94655</text>
<text x="1394.3" y="206.9">68.73370</text>
<text x="1394.3" y="239.9">68.52085</text>
<text x="1394.3" y="272.9">68.30155</text>
<text x="1394.3" y="305.9">68.08870</text>
<text x="1394.3" y="338.9">67.87585</text>
<text x="1394.3" y="371.9">67.65655</text>
<text x="1394.3" y="404.9">67.44370</text>
<text x="1394.3" y="437.9">67.23085</text>
<text x="1394.3" y="470.9">67.01155</text>
<text x="1394.3" y="503.9">66.79870</text>
<text x="1394.3" y="536.9">66.58585</text>
<text x="1.6" y="550" font-size="9.3">7 Sep 2015</text>
<text x="65.6" y="550" font-size="9.3">7 Sep 12:15</text>
<text x="129.6" y="550" font-size="9.3">7 Sep 14:15</text>
<text x="193.6" y="550" font-size="9.3">7 Sep 16:15</text>
<text x="257.6" y="550" font-size="9.3">7 Sep 18:15</text>
<text x="321.6" y="550" font-size="9.3">7 Sep 20:15</text>
<text x="385.6" y="550" font-size="9.3">7 Sep 22:15</text>
<text x="449.6" y="550" font-size="9.3">8 Sep 10:15</text>
<text x="513.6" y="550" font-size="9.3">8 Sep 12:15</text>
<text x="577.6" y="550" font-size="9.3">8 Sep 14:15</text>
<text x="641.6" y="550" font-size="9.3">8 Sep 16:15</text>
<text x="705.6" y="550" font-size="9.3">8 Sep 18:15</text>
<text x="769.6" y="550" font-size="9.3">8 Sep 20:15</text>
<text x="833.6" y="550" font-size="9.3">8 Sep 22:15</text>
<text x="897.6" y="550" font-size="9.3">9 Sep 10:15</text>
<text x="961.6" y="550" font-size="9.3">9 Sep 12:15</text>
<text x="1025.6" y="550" font-size="9.3">9 Sep 14:15</text>
<text x="1089.6" y="550" font-size="9.3">9 Sep 16:15</text>
<text x="1153.6" y="550" font-size="9.3">9 Sep 18:15</text>
<text x="1217.6" y="550" font-size="9.3">9 Sep 20:15</text>
<text x="1281.6" y="550" font-size="9.3">9 Sep 22:15</text>
<text x="1345.6" y="550" font-size="9.3">10 Sep 10:15</text>
</g>
<!-- bid price box -->
<rect x="1392" y="272" width="44" height="11" fill="#fff"/>
<text x="1394.5" y="281" font-size="9" fill="#000" shape-rendering="auto">68.24962</text>
<!-- chart title -->
<path d="M7 109h7L10.5 105z" fill="#fff" shape-rendering="auto"/>
<text x="18.5" y="110" font-size="9" fill="#fff" shape-rendering="auto" textLength="226" lengthAdjust="spacing" xml:space="preserve">USDRUB,M15  68.35495 68.35495 68.19845 68.24962</text>
<!-- one click trading panel -->
<defs>
<linearGradient id="bl1" x1="0" y1="0" x2="0" y2="1"><stop offset="0" stop-color="#5268ee"/><stop offset="1" stop-color="#3348dd"/></linearGradient>
<linearGradient id="bl2" x1="0" y1="0" x2="0" y2="1"><stop offset="0" stop-color="#3a50e2"/><stop offset="1" stop-color="#1a2cbc"/></linearGradient>
</defs>
<rect x="5" y="113" width="190" height="56" fill="#000"/>
<rect x="7" y="115" width="44" height="19" fill="url(#bl1)"/>
<rect x="151" y="115" width="43" height="19" fill="url(#bl1)"/>
<rect x="7" y="133" width="93" height="35" fill="url(#bl2)"/>
<rect x="102" y="133" width="92" height="35" fill="url(#bl2)"/>
<path d="M10.5 133.5H46M153.5 133.5H189" stroke="#8c9bf2" fill="none"/>
<rect x="54" y="115" width="16" height="16" fill="#d6d3cc"/>
<rect x="71" y="115" width="59" height="16" fill="#fff"/>
<rect x="131" y="115" width="16" height="16" fill="#d6d3cc"/>
<path d="M54.5 131V115.5H70M131.5 131V115.5H147" stroke="#fff" fill="none"/>
<path d="M54 130.5H69.5V115M131 130.5H146.5V115" stroke="#77756f" fill="none"/>
<path d="M58 121h7.5L61.75 125z M135 124.5h7.5L138.75 120.5z" fill="#000" shape-rendering="auto"/>
<g shape-rendering="auto" fill="#fff">
<text x="126.5" y="127" font-size="11" fill="#000" text-anchor="end">0.02</text>
<text x="16.5" y="129" font-size="11" fill="#eef0ff" textLength="21.5" lengthAdjust="spacingAndGlyphs">SELL</text>
<text x="161" y="129" font-size="11" fill="#eef0ff" textLength="19.5" lengthAdjust="spacingAndGlyphs">BUY</text>
<text x="12.5" y="162.5" font-size="10.5" font-weight="bold" textLength="30.5" lengthAdjust="spacingAndGlyphs">68.24</text>
<text x="46.5" y="162.5" font-size="31" stroke="#fff" stroke-width=".7">96</text>
<text x="83.5" y="145.8" font-size="10" font-weight="bold">2</text>
<text x="106.5" y="162.5" font-size="10.5" font-weight="bold" textLength="30.5" lengthAdjust="spacingAndGlyphs">68.27</text>
<text x="142" y="162.5" font-size="31" stroke="#fff" stroke-width=".7">84</text>
<text x="179" y="145.8" font-size="10" font-weight="bold">0</text>
</g>

</svg><!-- CHART TABS -->
<div class="hline" style="top:555px;background:#fff;height:2px"></div>
<div class="abs" style="left:0;top:557px;width:1439px;height:20px;background:#dcd9d2"></div>
<div class="abs" style="left:0;top:558px;width:1px;height:18px;background:#55534f"></div>
<div class="hline" style="top:577px;background:#fff;height:1px"></div>
<div class="abs" style="left:0;top:557px;width:1439px;height:1px;background:#000"></div><div class="abs" style="left:171px;top:555px;width:88px;height:21px;background:#fff;border:1px solid #000;border-top:0"></div>
<div class="t ctab" style="left:13px">EURUSD,M1</div>
<div class="t ctab" style="left:94px">XAUUSD,M30</div>
<div class="t ctab" style="left:182px;color:#000">USDRUB,M15</div>
<div class="t ctab" style="left:269px">EURJPY,M15</div>
<div class="t ctab" style="left:353px">EURCHF,M5</div>
<div class="t ctab" style="left:432.5px">GBPUSD,M5</div>
<div class="t ctab" style="left:512.5px">AUDUSD,M1</div>
<div class="t ctab" style="left:593px">USDJPY,M15</div>
<div class="t ctab" style="left:678px">AUDJPY,M1</div>
<div class="t ctab" style="left:758px">WTI,M15</div>
<div class="t ctab" style="left:824px">USDCAD,M1</div>
<div class="t ctab" style="left:906px">EURTRY,H1</div>
<div class="csep" style="left:83px"></div><div class="csep" style="left:343px"></div><div class="csep" style="left:423px"></div><div class="csep" style="left:503px"></div><div class="csep" style="left:583px"></div><div class="csep" style="left:667px"></div><div class="csep" style="left:747px"></div><div class="csep" style="left:815px"></div><div class="csep" style="left:895px"></div><div class="csep" style="left:975px"></div>
<svg style="left:1410px;top:562px" width="24" height="10" viewBox="0 0 24 10"><path d="M6 1.5v7L2.5 5z M17.5 1.5v7L21 5z" fill="#a9a7a2"/></svg>
<!-- TERMINAL -->
<div class="abs" style="left:0;top:578px;width:1439px;height:194px;background:#dcd9d2"></div>
<div class="abs" style="left:0;top:594px;width:13px;height:178px;background:linear-gradient(#c8c8c8,#b4b4b4 40%,#9b9b9b)"></div>
<div class="abs" style="left:13px;top:580px;width:1px;height:192px;background:#fff"></div>
<div class="abs" style="left:14px;top:581px;width:1421px;height:171px;background:#fff;border-left:1px solid #77756f;border-top:1px solid #77756f"></div><div class="abs" style="left:1435px;top:581px;width:2px;height:191px;background:#fff"></div>
<svg style="left:2px;top:583px" width="8" height="8" viewBox="0 0 8 8"><path d="M1 1.5l5.5 5M6.5 1.5L1 6.5" stroke="#000" stroke-width="1.6"/></svg>
<div class="abs" style="left:-15px;top:744px;width:44px;height:12px;line-height:12px;font-size:10.5px;color:#e4e4e3;transform:rotate(-90deg);transform-origin:center;text-align:center">Terminal</div>
<!-- header -->
<div class="abs" style="left:15px;top:582px;width:1420px;height:17px;background:#dcd9d2"></div>
<div class="hc" style="left:15px;width:140px"></div><div class="hc" style="left:155px;width:195px"></div><div class="hc" style="left:350px;width:97px"></div><div class="hc" style="left:447px;width:76px"></div><div class="hc" style="left:523px;width:96px"></div><div class="hc" style="left:619px;width:108px"></div><div class="hc" style="left:727px;width:108px"></div><div class="hc" style="left:835px;width:108px"></div><div class="hc" style="left:943px;width:108px"></div><div class="hc" style="left:1051px;width:108px"></div><div class="hc" style="left:1159px;width:108px"></div><div class="hc" style="left:1267px;width:168px"></div>
<div class="t" style="left:22px;top:585px">Order</div>
<svg style="left:62px;top:586px" width="10" height="9" viewBox="0 0 10 9"><path d="M4.5 1L1 7.5h7z" fill="#e9e7e2" stroke="#fff" stroke-width="1"/></svg>
<div class="t r" style="left:154px;width:187px;top:585px">Time</div>
<div class="t r" style="left:348px;width:90px;top:585px">Type</div>
<div class="t r" style="left:445px;width:69px;top:585px">Size</div>
<div class="t r" style="left:521px;width:89px;top:585px">Symbol</div>
<div class="t r" style="left:617px;width:101px;top:585px">Price</div>
<div class="t r" style="left:725px;width:101px;top:585px">S / L</div>
<div class="t r" style="left:833px;width:101px;top:585px">T / P</div>
<div class="t r" style="left:941px;width:102px;top:585px">Price</div>
<div class="t r" style="left:1050px;width:101px;top:585px">Commission</div>
<div class="t r" style="left:1158px;width:101px;top:585px">Swap</div>
<div class="t r" style="left:1266px;width:161px;top:585px">Profit</div>
<!-- row 1 -->
<div class="rs" style="left:153px"></div><div class="rs" style="left:348px"></div><div class="rs" style="left:445px"></div><div class="rs" style="left:521px"></div><div class="rs" style="left:617px"></div><div class="rs" style="left:725px"></div><div class="rs" style="left:833px"></div><div class="rs" style="left:941px"></div><div class="rs" style="left:1049px"></div><div class="rs" style="left:1157px"></div><div class="rs" style="left:1265px"></div>
<svg style="left:18px;top:601px" width="16" height="16" viewBox="0 0 16 16"><path d="M1.5 1.5h6.5l3 3v9.5h-9.5z" fill="#fbfbfb" stroke="#9b9b9b"/><path d="M8 1.5v3h3" fill="#e8e8e8" stroke="#9b9b9b"/><circle cx="10.8" cy="11.8" r="3.2" fill="#e8572f" stroke="#b53a1b" stroke-width=".6"/></svg>
<div class="t" style="left:37px;top:604px">35638982</div>
<div class="t r" style="left:154px;width:191.5px;top:604px">2015.09.10 10:45:04</div>
<div class="t r" style="left:348px;width:94px;top:604px">sell</div>
<div class="t r" style="left:445px;width:72.5px;top:604px">0.02</div>
<div class="t r" style="left:521px;width:93.5px;top:604px">usdrub</div>
<div class="t r" style="left:617px;width:105.5px;top:604px">68.48445</div>
<div class="t r" style="left:725px;width:105.5px;top:604px">68.31402</div>
<div class="t r" style="left:833px;width:105.5px;top:604px">68.07928</div>
<div class="t r" style="left:941px;width:106px;top:604px">68.27840</div>
<div class="t r" style="left:1050px;width:104.5px;top:604px">-0.08</div>
<div class="t r" style="left:1158px;width:105px;top:604px">0.00</div>
<div class="t r" style="left:1266px;width:145px;top:604px">6.04</div>
<svg style="left:1419px;top:604px" width="10" height="9" viewBox="0 0 10 9"><path d="M1.5 1l7 6.5M8.5 1l-7 6.5" stroke="#6e6e6e" stroke-width="2"/></svg>
<!-- row 2 -->
<div class="abs" style="left:15px;top:619px;width:1420px;height:20px;background:#d2d2d2"></div>
<svg style="left:18px;top:622px" width="14" height="14" viewBox="0 0 14 14"><rect x=".5" y=".5" width="11" height="13" rx="1" fill="#fff" stroke="#a6a6a6"/><path d="M6 3L2.3 7h2.2v3.5h3V7h2.2z" fill="#5cc33c" stroke="#2f8f19" stroke-width=".8"/></svg>
<div class="t b" style="left:37px;top:624px">Balance: 36.75 USD&nbsp; Equity: 42.71&nbsp; Margin: 20.00&nbsp; Free margin: 22.71&nbsp; Margin level: 213.55%</div>
<div class="t r b" style="left:1266px;width:145px;top:624px">5.96</div>
<!-- bottom tabs -->
<div class="abs" style="left:14px;top:752px;width:1425px;height:20px;background:#dcd9d2"></div>
<div class="abs" style="left:14px;top:751px;width:1422px;height:1px;background:#000"></div>
<div class="abs" style="left:17px;top:751px;width:48px;height:18px;background:#fff;border:1px solid #000;border-top:0"></div>
<div class="t" style="left:26px;top:753px">Trade</div>
<div class="t btab" style="left:74px">Exposure</div>
<div class="t btab" style="left:139px">Account History</div>
<div class="t btab" style="left:235px">News<span class="red">99</span></div>
<div class="t btab" style="left:293px">Alerts</div>
<div class="t btab" style="left:341px">Mailbox<span class="red">8</span></div>
<div class="t btab" style="left:404px">Code Base</div>
<div class="t btab" style="left:475px">Experts</div>
<div class="t btab" style="left:532px">Journal</div>
<div class="bsep" style="left:130px"></div><div class="bsep" style="left:226px"></div><div class="bsep" style="left:284px"></div><div class="bsep" style="left:332px"></div><div class="bsep" style="left:395px"></div><div class="bsep" style="left:466px"></div><div class="bsep" style="left:523px"></div><div class="bsep" style="left:578px"></div>
<!-- STATUS BAR -->
<div class="hline" style="top:772px;background:#f2f1ee;height:2px"></div>
<div class="hline" style="top:774px;background:#fff"></div>
<div class="abs" style="left:0;top:775px;width:1439px;height:22px;background:#dcd9d2"></div>
<div class="t" style="left:1px;top:782px;letter-spacing:-.1px">For Help, press F1</div>
<div class="t" style="left:724px;top:782px">Default</div>
<div class="ssep" style="left:719px"></div><div class="ssep" style="left:827px"></div><div class="ssep" style="left:929px"></div><div class="ssep" style="left:1001px"></div><div class="ssep" style="left:1072px"></div><div class="ssep" style="left:1141px"></div><div class="ssep" style="left:1212px"></div><div class="ssep" style="left:1277px"></div>
<svg style="left:1283px;top:781px" width="24" height="12" viewBox="0 0 24 12" shape-rendering="crispEdges"><rect x="0" y="0" width="2" height="11" fill="#6f8f25"/><rect x="0" y="11" width="2" height="1" fill="#1f6688"/><rect x="3" y="0" width="2" height="10" fill="#6f8f25"/><rect x="3" y="10" width="2" height="2" fill="#1f6688"/><rect x="6" y="0" width="2" height="9" fill="#6f8f25"/><rect x="6" y="9" width="2" height="3" fill="#1f6688"/><rect x="9" y="0" width="2" height="7" fill="#6f8f25"/><rect x="9" y="7" width="2" height="5" fill="#1f6688"/><rect x="12" y="0" width="2" height="6" fill="#6f8f25"/><rect x="12" y="6" width="2" height="6" fill="#1f6688"/><rect x="15" y="0" width="2" height="5" fill="#6f8f25"/><rect x="15" y="5" width="2" height="7" fill="#1f6688"/><rect x="18" y="0" width="2" height="4" fill="#6f8f25"/><rect x="18" y="4" width="2" height="8" fill="#1f6688"/><rect x="21" y="0" width="2" height="2" fill="#6f8f25"/><rect x="21" y="2" width="2" height="10" fill="#1f6688"/></svg>
<div class="t" style="left:1349px;top:782px">6678/5 kb</div>
<svg style="left:1425px;top:783px" width="14" height="14" viewBox="0 0 14 14"><path d="M13 2L2 13M13 6L6 13M13 10l-3 3" stroke="#8d8b86" stroke-width="1"/><path d="M14 2L3 13M14 6L7 13M14 10l-3 3" stroke="#fff" stroke-width="1"/></svg>
<div class="hline" style="top:796px;background:#4a4947"></div>
</div></body></html>
